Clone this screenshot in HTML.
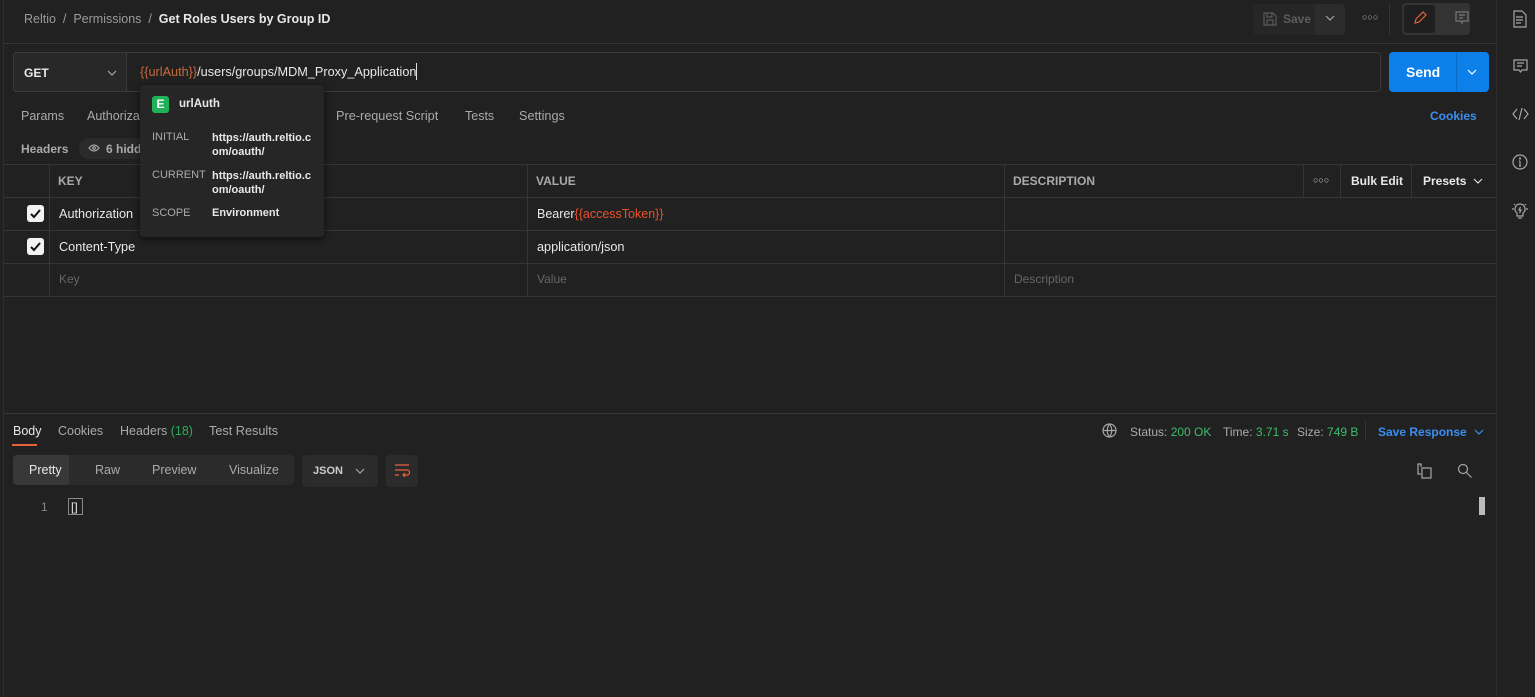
<!DOCTYPE html>
<html><head><style>
*{box-sizing:border-box;margin:0;padding:0}
body{width:1535px;height:697px;background:#212121;font-family:"Liberation Sans",sans-serif;font-size:12px;color:#e8e8e8;position:relative;overflow:hidden}
.a{position:absolute}
.b{font-weight:bold}
.g{color:#9b9b9b}
svg{position:absolute;fill:none;stroke:#a6a6a6;stroke-width:1.2}
</style></head><body>
<div class="a" style="left:3px;top:0;width:1px;height:697px;background:#2e2e2e"></div>
<div class="a" style="left:1496px;top:0;width:1px;height:697px;background:#2f2f2f"></div>
<div class="a" style="left:4px;top:43px;width:1492px;height:1px;background:#353535"></div>
<div class="a" style="left:24px;top:12px;font-size:12.5px"><span class="g">Reltio</span><span class="g"> &nbsp;/&nbsp; Permissions &nbsp;/&nbsp; </span><span class="b">Get Roles Users by Group ID</span></div>
<div class="a" style="left:1253px;top:4px;width:92px;height:31px;background:#262626;border-radius:4px"></div>
<div class="a" style="left:1315px;top:4px;width:30px;height:31px;background:#2c2c2c;border-radius:0 4px 4px 0"></div>
<svg style="left:1262px;top:11px" width="16" height="16" viewBox="0 0 16 16"><path d="M2 2h9l3 3v9H2z M5 2v4h5V2 M5 14V9h6v5" stroke="#5a5a5a"/></svg>
<div class="a b" style="left:1283px;top:12px;color:#5d5d5d">Save</div>
<svg style="left:1325px;top:15px" width="10" height="6" viewBox="0 0 10 6"><path d="M1 1l4 4 4-4"/></svg>
<div class="a" style="left:1362px;top:12px;font-size:9px;color:#bbb">○○○</div>
<div class="a" style="left:1389px;top:4px;width:1px;height:30px;background:#363636"></div>
<div class="a" style="left:1402px;top:3px;width:68px;height:32px;background:#333;border-radius:4px"></div>
<div class="a" style="left:1404px;top:5px;width:31px;height:28px;background:#1f1f1f;border-radius:3px"></div>
<svg style="left:1412px;top:10px" width="16" height="16" viewBox="0 0 16 16"><path d="M3 13l1-4 7-7 3 3-7 7z" stroke="#e0653a"/></svg>
<svg style="left:1455px;top:11px" width="14" height="14" viewBox="0 0 14 14"><path d="M1 1h12v9H8l-1 2-1-2H1z M4 4h6 M4 7h4" stroke="#777"/></svg>
<svg style="left:1513px;top:10px" width="14" height="18" viewBox="0 0 14 18"><path d="M1 1h8l4 4v12H1z M3 7h7 M3 10h7 M3 13h5"/></svg>
<svg style="left:1513px;top:59px" width="15" height="15" viewBox="0 0 15 15"><path d="M1 1h13v10H9l-1.5 2L6 11H1z M4 4h7 M4 7h5"/></svg>
<svg style="left:1512px;top:107px" width="17" height="14" viewBox="0 0 17 14"><path d="M5 2L1 7l4 5 M12 2l4 5-4 5 M10 1L7 13"/></svg>
<svg style="left:1512px;top:154px" width="16" height="16" viewBox="0 0 16 16"><circle cx="8" cy="8" r="7"/><path d="M8 7v5 M7 7h1 M7 12h2"/><circle cx="8" cy="4.5" r=".5"/></svg>
<svg style="left:1511px;top:201px" width="18" height="18" viewBox="0 0 18 18"><path d="M9 3a5 5 0 0 0-3 9v3h6v-3a5 5 0 0 0-3-9z M7 17h4 M9.5 6L8 9h2l-1.5 3 M1 8h2 M15 8h2 M3 3l1 1 M15 3l-1 1"/></svg>
<div class="a" style="left:13px;top:52px;width:1368px;height:40px;border:1px solid #3a3a3a;border-radius:4px"></div>
<div class="a" style="left:13px;top:52px;width:114px;height:40px;background:#282828;border:1px solid #3a3a3a;border-radius:4px 0 0 4px"></div>
<div class="a b" style="left:24px;top:66px">GET</div>
<svg style="left:107px;top:70px" width="10" height="6" viewBox="0 0 10 6"><path d="M1 1l4 4 4-4"/></svg>
<div class="a" style="left:140px;top:65px;font-size:12.7px"><span style="color:#c86a3c">{{urlAuth}}</span>/users/groups/MDM_Proxy_Application</div>
<div class="a" style="left:416px;top:63px;width:1px;height:17px;background:#ddd"></div>
<div class="a" style="left:1389px;top:52px;width:100px;height:40px;background:#0c7fe8;border-radius:4px"></div>
<div class="a" style="left:1456px;top:52px;width:1px;height:40px;background:#0a6cc6"></div>
<div class="a b" style="left:1406px;top:64px;font-size:14px;color:#fff">Send</div>
<svg style="left:1467px;top:69px" width="10" height="6" viewBox="0 0 10 6"><path d="M1 1l4 4 4-4" stroke="#fff"/></svg>
<div class="a" style="left:21px;top:109px;font-size:12.5px;color:#aaa">Params</div>
<div class="a" style="left:87px;top:109px;font-size:12.5px;color:#aaa">Authorization</div>
<div class="a" style="left:336px;top:109px;font-size:12.7px;color:#aaa">Pre-request Script</div>
<div class="a" style="left:465px;top:109px;font-size:12.5px;color:#aaa">Tests</div>
<div class="a" style="left:519px;top:109px;font-size:12.7px;color:#aaa">Settings</div>
<div class="a b" style="left:1430px;top:109px;color:#3a8ef0">Cookies</div>
<div class="a b" style="left:21px;top:142px;color:#aaa">Headers</div>
<div class="a" style="left:79px;top:138px;width:70px;height:21px;background:#2a2a2a;border-radius:10px"></div>
<div class="a b" style="left:106px;top:142px;color:#aaa">6 hidden</div>
<svg style="left:88px;top:144px" width="12" height="8" viewBox="0 0 12 8"><path d="M1 4q5-6 10 0q-5 6-10 0z"/><circle cx="6" cy="4" r="1.3"/></svg>
<div class="a" style="left:4px;top:164px;width:1492px;height:133px;border-top:1px solid #363636">
<div class="a" style="left:0;top:32px;width:1492px;height:1px;background:#363636"></div>
<div class="a" style="left:0;top:65px;width:1492px;height:1px;background:#363636"></div>
<div class="a" style="left:0;top:98px;width:1492px;height:1px;background:#363636"></div>
<div class="a" style="left:0;top:131px;width:1492px;height:1px;background:#363636"></div>
<div class="a" style="left:45px;top:0;width:1px;height:131px;background:#363636"></div>
<div class="a" style="left:523px;top:0;width:1px;height:131px;background:#363636"></div>
<div class="a" style="left:1000px;top:0;width:1px;height:131px;background:#363636"></div>
<div class="a" style="left:1299px;top:0;width:1px;height:32px;background:#363636"></div>
<div class="a" style="left:1336px;top:0;width:1px;height:32px;background:#363636"></div>
<div class="a" style="left:1407px;top:0;width:1px;height:32px;background:#363636"></div>
</div>
<div class="a b" style="left:58px;top:174px;color:#aaa">KEY</div>
<div class="a b" style="left:536px;top:174px;color:#aaa">VALUE</div>
<div class="a b" style="left:1013px;top:174px;color:#aaa">DESCRIPTION</div>
<div class="a" style="left:1313px;top:175px;font-size:9px;color:#ddd">○○○</div>
<div class="a b" style="left:1351px;top:174px">Bulk Edit</div>
<div class="a b" style="left:1423px;top:174px">Presets</div>
<svg style="left:1473px;top:178px" width="10" height="6" viewBox="0 0 10 6"><path d="M1 1l4 4 4-4" stroke="#ddd"/></svg>
<div class="a" style="left:27px;top:205px;width:17px;height:17px;background:#f2f2f2;border-radius:3px"></div>
<svg style="left:29px;top:208px" width="13" height="11" viewBox="0 0 13 11"><path d="M2 6l3 3 6-7" stroke="#111" stroke-width="2"/></svg>
<div class="a" style="left:27px;top:238px;width:17px;height:17px;background:#f2f2f2;border-radius:3px"></div>
<svg style="left:29px;top:241px" width="13" height="11" viewBox="0 0 13 11"><path d="M2 6l3 3 6-7" stroke="#111" stroke-width="2"/></svg>
<div class="a" style="left:59px;top:207px;font-size:12.7px">Authorization</div>
<div class="a" style="left:59px;top:240px;font-size:12.7px">Content-Type</div>
<div class="a" style="left:59px;top:272px;color:#666">Key</div>
<div class="a" style="left:537px;top:207px;font-size:12.5px">Bearer<span style="color:#e8522d">{{accessToken}}</span></div>
<div class="a" style="left:537px;top:240px;font-size:12.7px">application/json</div>
<div class="a" style="left:537px;top:272px;color:#666">Value</div>
<div class="a" style="left:1014px;top:272px;color:#666">Description</div>
<div class="a" style="left:140px;top:85px;width:184px;height:152px;background:#262626;border-radius:4px;box-shadow:0 2px 8px rgba(0,0,0,.6)"></div>
<div class="a b" style="left:152px;top:96px;width:17px;height:17px;background:#1fb25a;border-radius:3px;color:#fff;text-align:center;line-height:17px">E</div>
<div class="a b" style="left:179px;top:98px;font-size:11.5px">urlAuth</div>
<div class="a" style="left:152px;top:131px;font-size:11px;color:#aaa">INITIAL</div>
<div class="a b" style="left:212px;top:131px;font-size:11px;line-height:14px">https://auth.reltio.c<br>om/oauth/</div>
<div class="a" style="left:152px;top:169px;font-size:11px;color:#aaa">CURRENT</div>
<div class="a b" style="left:212px;top:169px;font-size:11px;line-height:14px">https://auth.reltio.c<br>om/oauth/</div>
<div class="a" style="left:152px;top:207px;font-size:11px;color:#aaa">SCOPE</div>
<div class="a b" style="left:212px;top:207px;font-size:11px">Environment</div>
<div class="a" style="left:4px;top:413px;width:1492px;height:1px;background:#363636"></div>
<div class="a" style="left:13px;top:424px;font-size:12.5px">Body</div>
<div class="a" style="left:12px;top:444px;width:25px;height:2px;background:#e8613a"></div>
<div class="a" style="left:58px;top:424px;font-size:12.5px;color:#aaa">Cookies</div>
<div class="a" style="left:120px;top:424px;font-size:12.5px;color:#aaa">Headers <span style="color:#27b05a">(18)</span></div>
<div class="a" style="left:209px;top:424px;font-size:12.7px;color:#aaa">Test Results</div>
<svg style="left:1102px;top:423px" width="15" height="15" viewBox="0 0 15 15"><circle cx="7.5" cy="7.5" r="6.5"/><path d="M1 7.5h13 M7.5 1c-3 4-3 9 0 13 M7.5 1c3 4 3 9 0 13"/></svg>
<div class="a" style="left:1130px;top:425px;color:#aaa">Status: <span style="color:#3dbd6a">200 OK</span></div>
<div class="a" style="left:1223px;top:425px;color:#aaa">Time: <span style="color:#3dbd6a">3.71 s</span></div>
<div class="a" style="left:1297px;top:425px;color:#aaa">Size: <span style="color:#3dbd6a">749 B</span></div>
<div class="a" style="left:1365px;top:421px;width:1px;height:20px;background:#363636"></div>
<div class="a b" style="left:1378px;top:425px;color:#3a8ef0">Save Response</div>
<svg style="left:1474px;top:429px" width="10" height="6" viewBox="0 0 10 6"><path d="M1 1l4 4 4-4" stroke="#3a8ef0"/></svg>
<div class="a" style="left:13px;top:455px;width:281px;height:30px;background:#2b2b2b;border-radius:4px"></div>
<div class="a" style="left:13px;top:455px;width:56px;height:30px;background:#383838;border-radius:4px 0 0 4px"></div>
<div class="a" style="left:29px;top:463px;font-size:12.5px">Pretty</div>
<div class="a" style="left:95px;top:463px;font-size:12.5px;color:#aaa">Raw</div>
<div class="a" style="left:152px;top:463px;font-size:12.5px;color:#aaa">Preview</div>
<div class="a" style="left:229px;top:463px;font-size:12.5px;color:#aaa">Visualize</div>
<div class="a" style="left:302px;top:455px;width:76px;height:32px;background:#2b2b2b;border-radius:4px"></div>
<div class="a b" style="left:313px;top:465px;font-size:11px;color:#ccc">JSON</div>
<svg style="left:355px;top:468px" width="10" height="6" viewBox="0 0 10 6"><path d="M1 1l4 4 4-4"/></svg>
<div class="a" style="left:386px;top:455px;width:32px;height:32px;background:#2b2b2b;border-radius:4px"></div>
<svg style="left:394px;top:463px" width="16" height="14" viewBox="0 0 16 14"><path d="M1 2h14 M1 7h12a2.5 2.5 0 0 1 0 5H9 M11 10l-2 2 2 2 M1 12h4" stroke="#e8613a"/></svg>
<svg style="left:1417px;top:463px" width="16" height="16" viewBox="0 0 16 16"><path d="M4 4V1H1v10h3 M5 5h9v10H5z"/></svg>
<svg style="left:1457px;top:463px" width="16" height="16" viewBox="0 0 16 16"><circle cx="6" cy="6" r="4.5"/><path d="M9.5 9.5l5 5"/></svg>
<div class="a" style="left:41px;top:500px;color:#888">1</div>
<div class="a" style="left:68px;top:498px;width:15px;height:17px;border:1px solid #888"></div>
<div class="a" style="left:71px;top:500px;color:#e8e8e8;font-size:12px">[]</div>
<div class="a" style="left:1479px;top:497px;width:6px;height:18px;background:#bbb"></div>
</body></html>
